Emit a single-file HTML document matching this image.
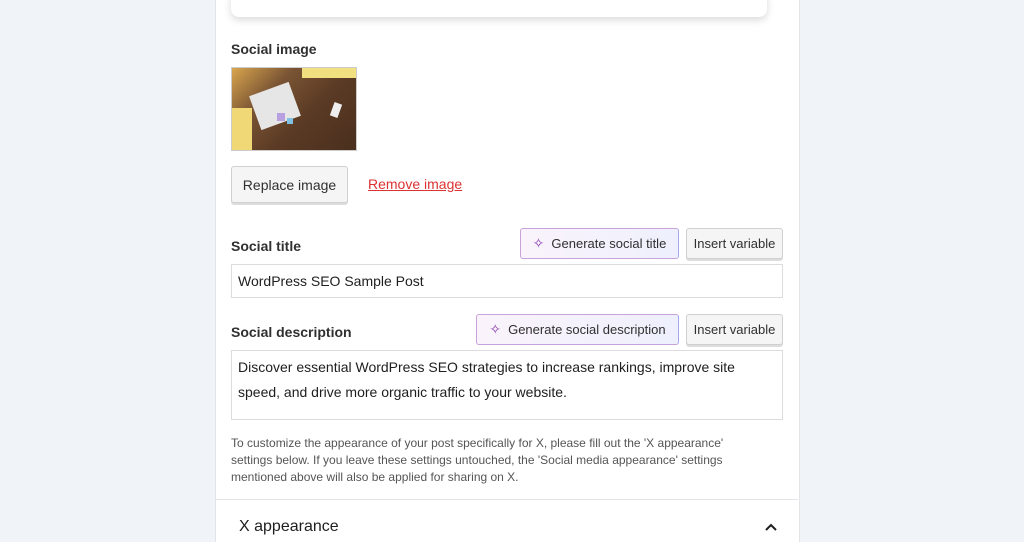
<!DOCTYPE html>
<html><head><style>
body{margin:0;width:1024px;height:542px;background:#f0f3f7;font-family:"Liberation Sans",sans-serif;color:#1e1e1e;position:relative;overflow:hidden}
.panel{position:absolute;left:215px;top:0;width:583px;height:542px;background:#fff;border-left:1px solid #e2e4e7;border-right:1px solid #e2e4e7}
.a{position:absolute}
.card{left:231px;top:-10px;width:536px;height:27px;background:#fff;border-radius:8px;box-shadow:0 3px 8px rgba(0,0,0,.15)}
.lbl{font-size:14px;font-weight:bold;color:#303030}
.btn{background:#f5f5f5;border:1px solid #d0d0d0;border-radius:3px;box-shadow:0 2px 0 #ddd;font-size:13px;color:#303030;display:flex;align-items:center;justify-content:center;box-sizing:border-box}
.ai{background:linear-gradient(90deg,#faf3fb,#eef0fd);border:1px solid #c7a3d9;border-right-color:#a5a8f0;border-radius:3px;font-size:13px;color:#303030;display:flex;align-items:center;justify-content:center;box-sizing:border-box;gap:7px}
.inp{border:1px solid #dcdcde;box-sizing:border-box;background:#fff;font-size:14px;color:#1e1e1e}
</style></head><body>
<div class="panel"></div>
<div class="a card"></div>
<div class="a lbl" style="left:231px;top:41px">Social image</div>
<div class="a" style="left:231px;top:67px;width:126px;height:84px;border:1px solid #ccc;box-sizing:border-box;background:linear-gradient(135deg,#d9a54e 0%,#7a5434 30%,#5a3a24 60%,#4a2f1e 100%);overflow:hidden">
<div class="a" style="left:22px;top:20px;width:42px;height:36px;background:#e6e6e6;transform:rotate(-20deg)"></div>
<div class="a" style="left:0;top:40px;width:20px;height:44px;background:#f0d877"></div>
<div class="a" style="left:70px;top:0;width:56px;height:10px;background:#f0e080"></div>
<div class="a" style="left:100px;top:35px;width:8px;height:14px;background:#eee;transform:rotate(20deg)"></div>
<div class="a" style="left:45px;top:45px;width:8px;height:8px;background:#b8a0e0"></div>
<div class="a" style="left:55px;top:50px;width:6px;height:6px;background:#80c0e0"></div>
</div>
<div class="a btn" style="left:231px;top:166px;width:117px;height:37px;font-size:14px">Replace image</div>
<div class="a" style="left:368px;top:176px;font-size:14px;color:#dc3232;text-decoration:underline">Remove image</div>
<div class="a lbl" style="left:231px;top:238px">Social title</div>
<div class="a ai" style="left:520px;top:228px;width:159px;height:31px"><span style="color:#8a3fb0;font-size:14px">✧</span>Generate social title</div>
<div class="a btn" style="left:686px;top:228px;width:97px;height:31px">Insert variable</div>
<div class="a inp" style="left:231px;top:264px;width:552px;height:34px;padding:8px 6px">WordPress SEO Sample Post</div>
<div class="a lbl" style="left:231px;top:324px">Social description</div>
<div class="a ai" style="left:476px;top:314px;width:203px;height:31px"><span style="color:#8a3fb0;font-size:14px">✧</span>Generate social description</div>
<div class="a btn" style="left:686px;top:314px;width:97px;height:31px">Insert variable</div>
<div class="a inp" style="left:231px;top:350px;width:552px;height:70px;padding:4px 6px;line-height:25px">Discover essential WordPress SEO strategies to increase rankings, improve site speed, and drive more organic traffic to your website.</div>
<div class="a" style="left:231px;top:435px;width:530px;font-size:12px;line-height:17px;color:#555">To customize the appearance of your post specifically for X, please fill out the 'X appearance' settings below. If you leave these settings untouched, the 'Social media appearance' settings mentioned above will also be applied for sharing on X.</div>
<div class="a" style="left:216px;top:499px;width:582px;height:1px;background:#e2e4e7"></div>
<div class="a" style="left:239px;top:518px;font-size:16px;color:#1e1e1e">X appearance</div>
<svg class="a" style="left:763px;top:521px" width="16" height="12" viewBox="0 0 16 12"><path d="M3 9 L8 4 L13 9" fill="none" stroke="#1e1e1e" stroke-width="2"/></svg>
</body></html>
